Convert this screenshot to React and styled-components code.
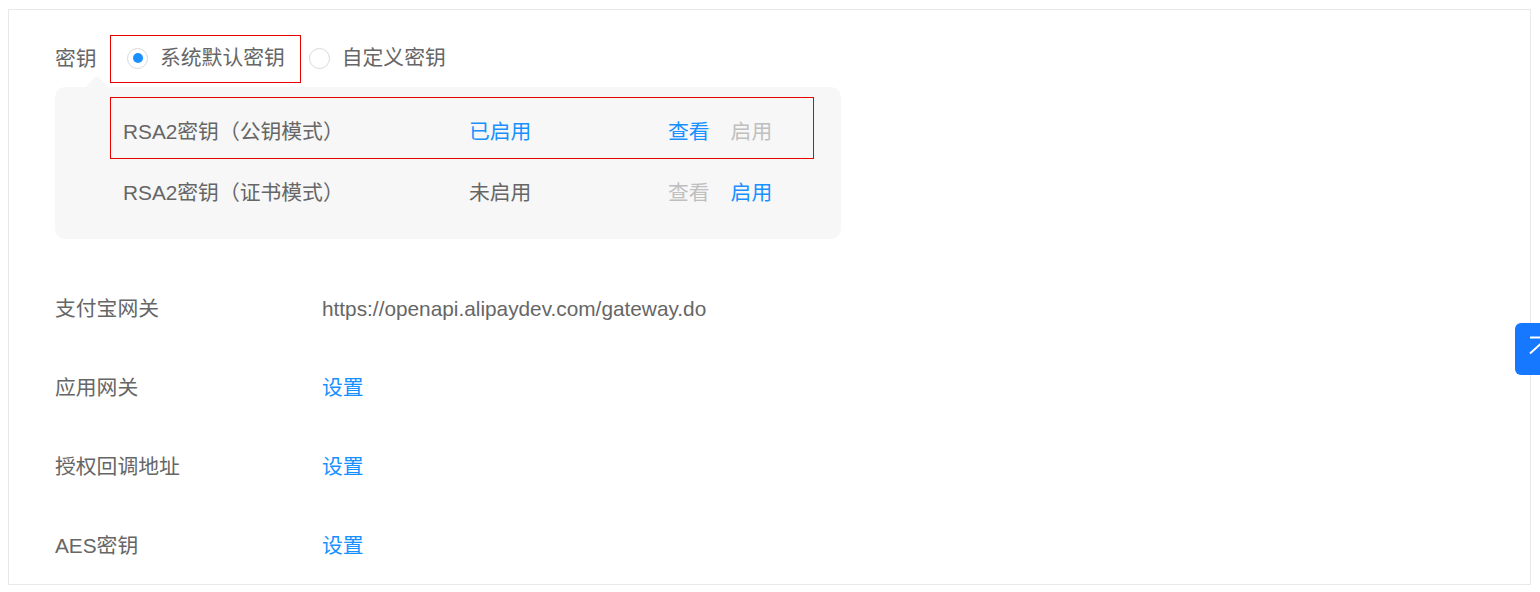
import styled, { createGlobalStyle } from "styled-components";

const GlobalStyle = createGlobalStyle`
  body {
    margin: 0;
    background: #fff;
    font-family: "Liberation Sans", "Noto Sans CJK SC", sans-serif;
  }
`;

const rows = [
  { name: "RSA2密钥（公钥模式）", status: "已启用", on: true },
  { name: "RSA2密钥（证书模式）", status: "未启用", on: false },
];

const fields = [
  { label: "支付宝网关", value: "https://openapi.alipaydev.com/gateway.do" },
  { label: "应用网关", link: "设置" },
  { label: "授权回调地址", link: "设置" },
  { label: "AES密钥", link: "设置" },
];

function App() {
  return (
    <>
      <GlobalStyle />
      <Panel>
        <KeyRow>
          <Label $w={55}>密钥</Label>
          <Marked>
            <Radio $checked />
            <RadioText>系统默认密钥</RadioText>
          </Marked>
          <RadioItem>
            <Radio />
            <RadioText>自定义密钥</RadioText>
          </RadioItem>
        </KeyRow>

        <KeyBox>
          {rows.map((r, i) => {
            const content = (
              <>
                <NameCell>{r.name}</NameCell>
                <StatusCell $on={r.on}>{r.status}</StatusCell>
                <Action $on={r.on}>查看</Action>
                <Action $on={!r.on}>启用</Action>
              </>
            );
            return i === 0 ? (
              <MarkedRow key={r.name}>{content}</MarkedRow>
            ) : (
              <KeyLine key={r.name}>{content}</KeyLine>
            );
          })}
        </KeyBox>

        <Fields>
          {fields.map((f) => (
            <Field key={f.label}>
              <Label $w={267}>{f.label}</Label>
              {f.link ? <Link>{f.link}</Link> : <Value>{f.value}</Value>}
            </Field>
          ))}
        </Fields>
      </Panel>

      <TopButton>
        <svg width="24" height="26" viewBox="0 0 24 26" fill="none" stroke="#fff" strokeWidth="2">
          <path d="M1 1.5h22" />
          <path d="M1 17.5l11-10 11 10" />
          <path d="M12 8v18" />
        </svg>
      </TopButton>
    </>
  );
}

export default App;

const Panel = styled.div`
  box-sizing: border-box;
  margin: 9px 0 0 8px;
  width: 1523px;
  height: 576px;
  border: 1px solid #e8e8e8;
  padding: 25px 0 0 46px;
  overflow: hidden;
`;

const KeyRow = styled.div`
  display: flex;
  align-items: center;
`;

const Label = styled.div`
  width: ${(p) => p.$w}px;
  flex-shrink: 0;
  font-size: 20.8px;
  line-height: 24px;
  color: #666;
`;

const Marked = styled.div`
  display: flex;
  align-items: center;
  height: 48px;
  box-sizing: border-box;
  border: 1px solid #e60000;
  padding: 0 15px 2px 16px;
`;

const RadioItem = styled.div`
  display: flex;
  align-items: center;
  margin-left: 8px;
  padding-bottom: 2px;
`;

const Radio = styled.span`
  box-sizing: border-box;
  width: 21px;
  height: 21px;
  border-radius: 50%;
  border: 1px solid #d9d9d9;
  background: #fff;
  display: flex;
  align-items: center;
  justify-content: center;

  &::after {
    content: "";
    width: 10px;
    height: 10px;
    border-radius: 50%;
    background: ${(p) => (p.$checked ? "#1890ff" : "transparent")};
  }
`;

const RadioText = styled.span`
  margin-left: 12px;
  font-size: 20.8px;
  line-height: 24px;
  color: #666;
`;

const KeyBox = styled.div`
  position: relative;
  box-sizing: border-box;
  margin-top: 4px;
  width: 786px;
  height: 152px;
  padding: 10px 0 0 55px;
  background: #f7f7f7;
  border-radius: 10px;

  &::before {
    content: "";
    position: absolute;
    left: 34px;
    top: -8px;
    width: 16px;
    height: 16px;
    background: #f7f7f7;
    border-radius: 2px;
    transform: rotate(45deg);
  }
`;

const KeyLine = styled.div`
  display: flex;
  align-items: center;
  padding: 22px 0 0 13px;
  font-size: 20.8px;
  line-height: 24px;
`;

const MarkedRow = styled(KeyLine)`
  position: relative;
  width: 704px;
  box-sizing: border-box;
  border: 1px solid #e60000;
  padding: 22px 0 14px 12px;
`;

const NameCell = styled.span`
  width: 346px;
  color: #666;
`;

const StatusCell = styled.span`
  width: 199px;
  color: ${(p) => (p.$on ? "#1890ff" : "#666")};
`;

const Action = styled.span`
  margin-right: 21px;
  color: ${(p) => (p.$on ? "#1890ff" : "#bfbfbf")};
`;

const Fields = styled.div`
  display: flex;
  flex-direction: column;
  gap: 55px;
  margin-top: 58px;
`;

const Field = styled.div`
  display: flex;
  align-items: center;
`;

const Value = styled.span`
  font-size: 20.8px;
  line-height: 24px;
  color: #666;
`;

const Link = styled.span`
  font-size: 20.8px;
  line-height: 24px;
  color: #1890ff;
`;

const TopButton = styled.div`
  position: fixed;
  left: 1515px;
  top: 323px;
  width: 52px;
  height: 52px;
  border-radius: 6px;
  background: #1677ff;
  display: flex;
  align-items: center;
  justify-content: center;
`;
